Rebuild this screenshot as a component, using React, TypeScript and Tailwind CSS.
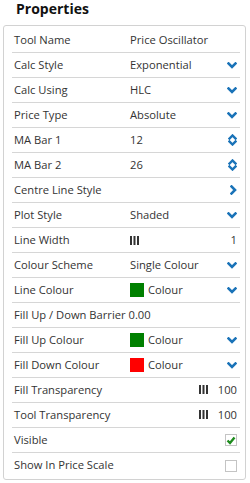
import React from "react";

const Down = () => (
  <svg width="10" height="7" viewBox="0 0 10 7" className="block">
    <polyline points="1.5,1.5 5,5 8.5,1.5" fill="none" stroke="#1a73b8" strokeWidth="2.6" strokeLinecap="square" />
  </svg>
);
const Right = () => (
  <svg width="7" height="10" viewBox="0 0 7 10" className="block">
    <polyline points="1.5,1.5 5,5 1.5,8.5" fill="none" stroke="#1a73b8" strokeWidth="2.6" strokeLinecap="square" />
  </svg>
);
const Sort = () => (
  <svg width="9" height="12" viewBox="0 0 9 12" className="block">
    <polyline points="1.5,4.5 4.5,1.5 7.5,4.5" fill="none" stroke="#1a73b8" strokeWidth="2.4" strokeLinecap="square" />
    <polyline points="1.5,7.5 4.5,10.5 7.5,7.5" fill="none" stroke="#1a73b8" strokeWidth="2.4" strokeLinecap="square" />
  </svg>
);
const Bars = () => (
  <svg width="9" height="9" viewBox="0 0 9 9" className="block">
    <rect x="0" y="0" width="2" height="9" fill="#333" />
    <rect x="3.5" y="0" width="2" height="9" fill="#333" />
    <rect x="7" y="0" width="2" height="9" fill="#333" />
  </svg>
);
const Check = ({ on }: { on: boolean }) => (
  <div className="w-[12px] h-[12px] border border-[#c4c4c4] bg-white flex items-center justify-center">
    {on && (
      <svg width="10" height="9" viewBox="0 0 10 9" className="block">
        <polyline points="1.5,4.5 4,7 8.5,1.5" fill="none" stroke="#1e8c1e" strokeWidth="2.4" />
      </svg>
    )}
  </div>
);
const Swatch = ({ c }: { c: string }) => <span className={`inline-block w-[14px] h-[14px] mr-[4px] ${c}`} />;

type Row = { label: string; value?: React.ReactNode; icon?: React.ReactNode; right?: React.ReactNode; inline?: boolean };

const rows: Row[] = [
  { label: "Tool Name", value: "Price Oscillator" },
  { label: "Calc Style", value: "Exponential", icon: <Down /> },
  { label: "Calc Using", value: "HLC", icon: <Down /> },
  { label: "Price Type", value: "Absolute", icon: <Down /> },
  { label: "MA Bar 1", value: "12", icon: <Sort /> },
  { label: "MA Bar 2", value: "26", icon: <Sort /> },
  { label: "Centre Line Style", icon: <Right /> },
  { label: "Plot Style", value: "Shaded", icon: <Down /> },
  { label: "Line Width", value: <Bars />, icon: <span>1</span> },
  { label: "Colour Scheme", value: "Single Colour", icon: <Down /> },
  { label: "Line Colour", value: <span className="flex items-center"><Swatch c="bg-[#008000]" />Colour</span>, icon: <Down /> },
  { label: "Fill Up / Down Barrier", value: "0.00", inline: true },
  { label: "Fill Up Colour", value: <span className="flex items-center"><Swatch c="bg-[#008000]" />Colour</span>, icon: <Down /> },
  { label: "Fill Down Colour", value: <span className="flex items-center"><Swatch c="bg-[#ff0000]" />Colour</span>, icon: <Down /> },
  { label: "Fill Transparency", right: <span className="flex items-center gap-[10px]"><Bars /><span>100</span></span> },
  { label: "Tool Transparency", right: <span className="flex items-center gap-[10px]"><Bars /><span>100</span></span> },
  { label: "Visible", right: <Check on={true} /> },
  { label: "Show In Price Scale", right: <Check on={false} /> },
];

export default function App() {
  return (
    <div className="w-[250px] h-[483px] bg-white text-[#333] font-['Open_Sans',sans-serif] overflow-hidden">
      <div className="h-[25px] pl-[16px] text-[14px] font-bold leading-[18px] text-[#111]">Properties</div>
      <div className="ml-[3px] w-[243px] border border-[#d2d2d2] rounded-[3px] pl-[8px] pr-[5px] pt-[2px] pb-[1px]">
        {rows.map((r, i) => (
          <div
            key={i}
            className={`flex items-center h-[25px] pl-[2px] pr-[3px] text-[11.2px] ${i < rows.length - 1 ? "border-b border-[#d6d6d6]" : ""}`}
          >
            {r.inline ? (
              <span className="whitespace-nowrap">{r.label} {r.value}</span>
            ) : (
              <>
                <div className="w-[116px] shrink-0 whitespace-nowrap">{r.label}</div>
                <div className="flex-1 flex items-center">{r.value}</div>
                {r.icon && <div className="flex items-center">{r.icon}</div>}
                {r.right && <div className="flex items-center">{r.right}</div>}
              </>
            )}
          </div>
        ))}
      </div>
    </div>
  );
}
